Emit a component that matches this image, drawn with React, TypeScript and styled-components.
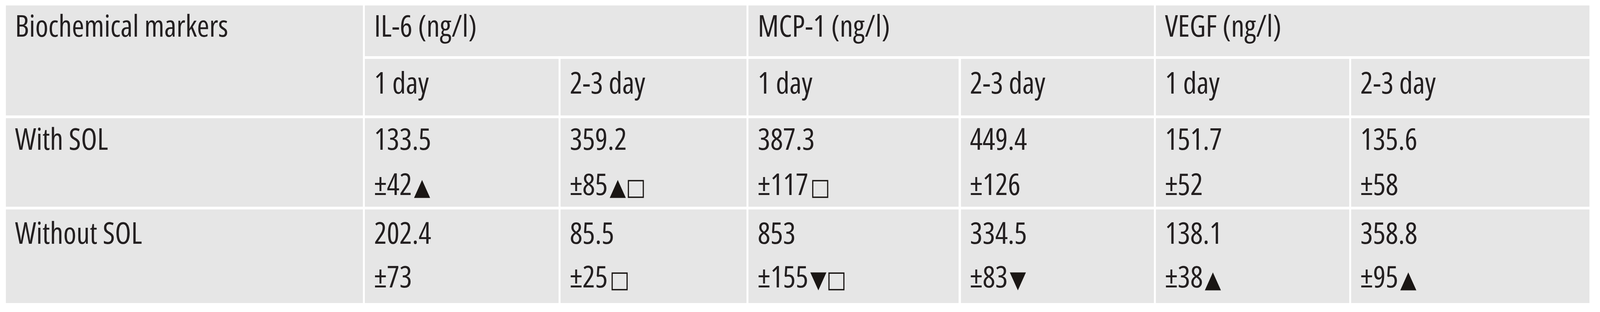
import React from "react";
import styled, { createGlobalStyle } from "styled-components";

const GlobalStyle = createGlobalStyle`
  html, body {
    margin: 0;
    padding: 0;
    background: #ffffff;
  }
  body {
    font-family: "Open Sans", "Noto Sans", sans-serif;
    color: #231f20;
  }
`;

// column widths are fractions of the page width, row heights are fixed
const Table = styled.div`
  display: grid;
  grid-template-columns: 1208fr 655fr 629fr 711fr 653fr 654fr 806fr;
  grid-template-rows: 130px 145px 227px 240px;
  gap: 7px 0.13vw;
  padding: 14px 0.665vw 0 0.37vw;
`;

const Cell = styled.div<{ $top: number; $gap?: number; $span?: number; $rows?: number }>`
  grid-column: span ${(p) => p.$span ?? 1};
  grid-row: span ${(p) => p.$rows ?? 1};
  background: #e6e6e6;
  padding: ${(p) => p.$top}px 0 0 0.573vw;
  display: flex;
  flex-direction: column;
  gap: ${(p) => p.$gap ?? 30}px;
  font-size: 76px;
  font-stretch: 84%;
  line-height: 86px;
  white-space: nowrap;
  overflow: hidden;
`;

const Line = styled.div`
  display: flex;
  align-items: baseline;
`;

const Mark = styled.span`
  font-family: "DejaVu Sans", sans-serif;
  font-size: 60px;
  margin-left: 0.12vw;
  color: #1a1614;
`;

type Value = { mean: string; sd: string; marks: string };

const groups = ["IL-6 (ng/l)", "MCP-1 (ng/l)", "VEGF (ng/l)"];

const rows: { label: string; top: number; gap: number; values: Value[] }[] = [
  {
    label: "With SOL",
    top: 9,
    gap: 30,
    values: [
      { mean: "133.5", sd: "±42", marks: "▲" },
      { mean: "359.2", sd: "±85", marks: "▲□" },
      { mean: "387.3", sd: "±117", marks: "□" },
      { mean: "449.4", sd: "±126", marks: "" },
      { mean: "151.7", sd: "±52", marks: "" },
      { mean: "135.6", sd: "±58", marks: "" },
    ],
  },
  {
    label: "Without SOL",
    top: 16,
    gap: 26,
    values: [
      { mean: "202.4", sd: "±73", marks: "" },
      { mean: "85.5", sd: "±25", marks: "□" },
      { mean: "853", sd: "±155", marks: "▼□" },
      { mean: "334.5", sd: "±83", marks: "▼" },
      { mean: "138.1", sd: "±38", marks: "▲" },
      { mean: "358.8", sd: "±95", marks: "▲" },
    ],
  },
];

export default function App() {
  return (
    <>
      <GlobalStyle />
      <Table>
        <Cell $top={8} $rows={2}>
          <Line>Biochemical markers</Line>
        </Cell>
        {groups.map((g) => (
          <Cell key={g} $top={8} $span={2}>
            <Line>{g}</Line>
          </Cell>
        ))}
        {groups.flatMap((g) => [
          <Cell key={g + "1"} $top={17}>
            <Line>1 day</Line>
          </Cell>,
          <Cell key={g + "2"} $top={17}>
            <Line>2-3 day</Line>
          </Cell>,
        ])}
        {rows.map((r) => (
          <React.Fragment key={r.label}>
            <Cell $top={r.top} $gap={r.gap}>
              <Line>{r.label}</Line>
            </Cell>
            {r.values.map((v, i) => (
              <Cell key={i} $top={r.top} $gap={r.gap}>
                <Line>{v.mean}</Line>
                <Line>
                  {v.sd}
                  {v.marks && <Mark>{v.marks}</Mark>}
                </Line>
              </Cell>
            ))}
          </React.Fragment>
        ))}
      </Table>
    </>
  );
}
